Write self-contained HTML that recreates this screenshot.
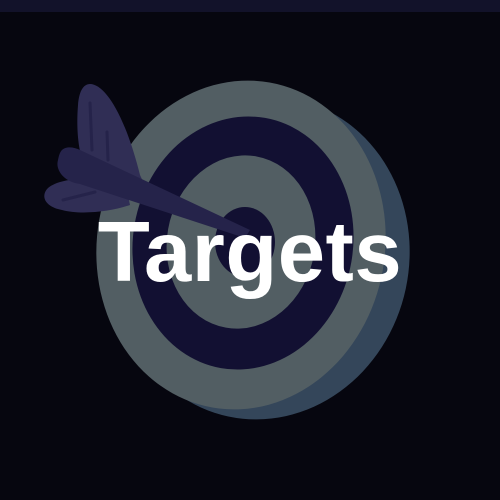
<!DOCTYPE html>
<html><head><style>
html,body{margin:0;padding:0;width:500px;height:500px;overflow:hidden;background:#06060f}
.bar{position:absolute;left:0;top:0;width:500px;height:12px;background:#12122a}
.t{position:absolute;left:0;width:500px;top:203px;text-align:center;font-family:"Liberation Sans",sans-serif;font-weight:bold;font-size:85px;color:#fff;line-height:100px;padding-left:0px;letter-spacing:0.5px}
</style></head><body>
<div class="bar"></div>
<svg width="500" height="500" style="position:absolute;left:0;top:0">
<ellipse cx="262" cy="258" rx="147" ry="162" fill="#34465a" transform="rotate(12 262 258)"/>
<ellipse cx="241" cy="245" rx="144" ry="165" fill="#525e63" transform="rotate(10 241 245)"/>
<ellipse cx="243" cy="243" rx="110" ry="127" fill="#121032" transform="rotate(10 243 243)"/>
<ellipse cx="241" cy="242" rx="74" ry="87" fill="#525e63" transform="rotate(10 241 242)"/>
<ellipse cx="245" cy="242" rx="30" ry="35" fill="#121032"/>
<path d="M90 84 C105 84 125 115 140 175 L147 190 L90 175 C78 160 76 130 78 105 C79 92 83 84 90 84Z" fill="#302e55"/>
<path d="M90 103 L92 150 M107 132 L108 160" stroke="#25234a" stroke-width="3" stroke-linecap="round" fill="none"/>
<path d="M48 188 C60 178 90 176 125 182 L130 205 C110 212 80 215 62 210 C45 207 40 196 48 188Z" fill="#302e55"/>
<path d="M63 200 L95 192" stroke="#25234a" stroke-width="3" stroke-linecap="round"/>
<path d="M62 150 C66 146 74 147 80 150 L250 230 L245 238 L80 184 C64 182 55 170 58 160 C59 155 60 152 62 150Z" fill="#25234a"/>
</svg>
<div class="t">Targets</div>
</body></html>
